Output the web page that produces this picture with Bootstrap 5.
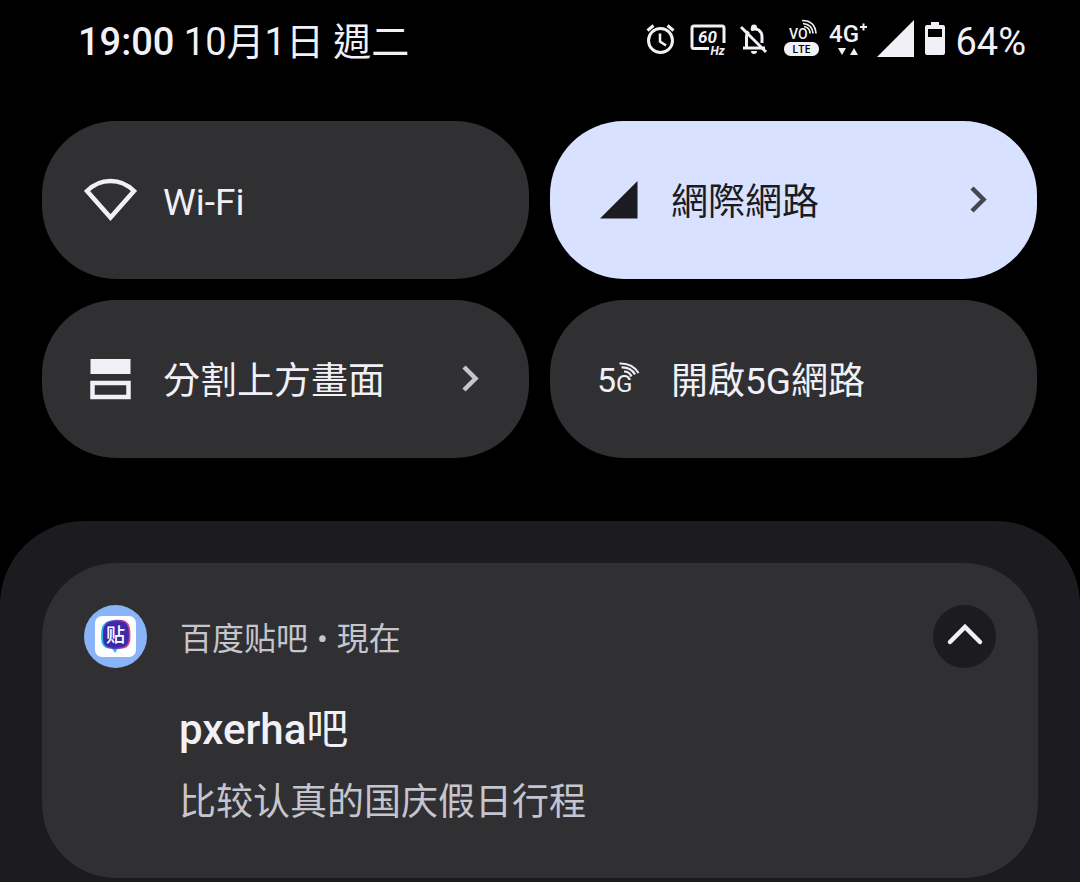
<!DOCTYPE html>
<html lang="zh-Hant">
<head>
<meta charset="utf-8">
<meta name="viewport" content="width=device-width, initial-scale=1">
<title>通知欄</title>
<link href="https://cdn.jsdelivr.net/npm/bootstrap@5.3.0/dist/css/bootstrap.min.css" rel="stylesheet">
<style>
  body { background: #000; color: #f2f0f7; font-family: Roboto, "Noto Sans CJK TC", sans-serif; font-size: 37px; line-height: 44px; }
  svg { display: block; flex: none; }
  .status-bar { padding: 19px 54px 0 78px; font-size: 38px; }
  .status-icons { gap: 10px; }
  .status-icons svg { margin-bottom: 6px; }
  .clock-time { font-weight: 500; }
  .quick-tiles { display: grid; grid-template-columns: 1fr 1fr; gap: 21px; padding: 56px 43px 63px 42px; }
  .tile { min-height: 158px; padding: 0 40px 0 42px; border: 0; border-radius: 74px; background: #303032; color: #f2f0f7; text-align: left; }
  .tile-icon { width: 53px; margin-right: 26px; }
  .tile-label { padding-top: 6px; }
  .tile-on { background: #d8e1ff; color: #1b1b20; }
  .arrow { color: #c5c5d0; }
  .tile-on .arrow { color: #454652; }
  .shade { background: #1b1b20; border-radius: 84px 84px 0 0; padding: 42px 42px 4px; }
  .notice { background: #303032; border-radius: 74px; padding: 42px 42px 53px; }
  .notice-head { gap: 33px; font-size: 32px; color: #c5c5d0; }
  .notice-head > div { padding-top: 2px; }
  .dot { margin: 0 1px; }
  .notice-text { padding: 38px 0 0 95px; font-family: Roboto, "Noto Sans CJK SC", sans-serif; }
  .notice-title { font-size: 42px; line-height: 48px; font-weight: 500; margin: 0; }
  .notice-title span { font-weight: 400; }
  .notice-body { color: #c5c5d0; margin: 27px 0 0; }
  .fold { width: 63px; height: 63px; border: 0; background: #1b1b20; color: #f2f0f7; }
  .sc { font-family: "Noto Sans CJK SC", sans-serif; }
</style>
</head>
<body>
<div class="d-flex flex-column min-vh-100">
  <header class="status-bar d-flex justify-content-between align-items-center">
    <div><span class="clock-time">19:00</span> <span>10月1日 週二</span></div>
    <div class="status-icons d-flex align-items-center">
      <svg width="32" height="36" viewBox="0 0 32 36" fill="none" stroke="currentColor" stroke-width="3" aria-label="鬧鐘"><circle cx="15.500" cy="19.500" r="12"/><path d="M2.500 9.500 8.500 4.500M28.500 9.500 22.500 4.500"/><path d="M15 12.500v8l6 4" stroke-width="2.500"/></svg>
      <svg width="40" height="40" viewBox="0 0 40 40" fill="none" aria-label="60 Hz"><path d="M22 29.500H7a2 2 0 0 1-2-2V9a2 2 0 0 1 2-2h28a2 2 0 0 1 2 2v15" stroke="currentColor" stroke-width="3"/><text x="20.500" y="24" text-anchor="middle" font-family="Roboto" font-size="17" font-style="italic" font-weight="700" fill="currentColor">60</text><text x="30.500" y="36" text-anchor="middle" font-family="Roboto" font-size="12" font-style="italic" font-weight="700" fill="currentColor">Hz</text></svg>
      <svg width="36" height="36" viewBox="0 0 36 36" fill="none" stroke="currentColor" stroke-width="3" aria-label="靜音"><path d="M6 27h22M9.500 27V16q0-3 2-5.500M14 9c6-3 11 1 11 7v6"/><path d="m4 6 25 25"/><path d="M14 8V6.500a3 3 0 0 1 6 0V8zM14 30h6a3 3 0 0 1-6 0z" fill="currentColor" stroke="none"/></svg>
      <svg width="36" height="40" viewBox="0 0 36 40" fill="none" aria-label="VoLTE"><text x="6" y="20" font-size="14" font-family="Roboto" font-weight="500" fill="currentColor">VO</text><path d="M21 7.500q6 1 6 7M20 4.500q9.500 1 10 10M19 1.500q13 0 14 13" stroke="currentColor" stroke-width="1.700"/><rect x="1" y="23" width="35" height="14" rx="6.500" fill="currentColor"/><text x="18.500" y="34" text-anchor="middle" font-family="Open Sans" font-size="11" font-weight="600" fill="#000">LTE</text></svg>
      <svg width="38" height="40" viewBox="0 0 38 40" fill="currentColor" aria-label="4G+"><text x="0" y="23" font-size="24" font-weight="500" font-family="Roboto">4G</text><path d="M31 7h7v2h-7zM33.500 4.500h2v7h-2zM9 29h8l-4 7zM21 36h8l-4-7z"/></svg>
      <svg width="38" height="38" viewBox="0 0 38 38" fill="currentColor" aria-label="訊號"><path d="M0 37 37 0v37z"/></svg>
      <svg width="20" height="36" viewBox="0 0 20 36" fill="currentColor" aria-label="電池"><path fill-rule="evenodd" d="M6 1h8v3h4a2 2 0 0 1 2 2v26a2 2 0 0 1-2 2H2a2 2 0 0 1-2-2V6a2 2 0 0 1 2-2h4zM3 8v8h14V8z"/></svg>
      <span>64%</span>
    </div>
  </header>

  <main class="quick-tiles">
    <button type="button" class="tile d-flex align-items-center">
      <svg class="tile-icon" height="46" viewBox="0 0 53 46" fill="none" stroke="currentColor" stroke-width="4.500"><path d="M3 14C16 .5 37 .5 50 14L26.500 40.500z"/></svg>
      <span class="tile-label flex-grow-1">Wi-Fi</span>
    </button>
    <button type="button" class="tile tile-on d-flex align-items-center">
      <svg class="tile-icon" height="38" viewBox="0 0 53 38" fill="currentColor"><path d="M8 37.500 45.500 0v37.500z"/></svg>
      <span class="tile-label flex-grow-1">網際網路</span>
      <svg class="arrow" width="32" height="32" viewBox="0 0 32 32" fill="none" stroke="currentColor" stroke-width="4.500"><path d="m7 4 11.500 11.500L7 27"/></svg>
    </button>
    <button type="button" class="tile d-flex align-items-center">
      <svg class="tile-icon" height="42" viewBox="0 0 53 42"><path d="M6.500 1h40v15h-40z" fill="currentColor"/><path d="M8.500 25h36v14h-36z" fill="none" stroke="currentColor" stroke-width="4.500"/></svg>
      <span class="tile-label flex-grow-1">分割上方畫面</span>
      <svg class="arrow" width="32" height="32" viewBox="0 0 32 32" fill="none" stroke="currentColor" stroke-width="4.500"><path d="m7 4 11.500 11.500L7 27"/></svg>
    </button>
    <button type="button" class="tile d-flex align-items-center">
      <svg class="tile-icon" height="42" viewBox="0 0 53 42" fill="currentColor" font-family="Roboto"><text x="5" y="34" font-size="34">5</text><text x="24" y="34" font-size="24">G</text><path d="M32 13.500q5.500 0 7.500 5M29.500 9.500q9-.5 13.500 7M27.500 5.500q13-.5 19 9.500" fill="none" stroke="currentColor" stroke-width="2.200"/></svg>
      <span class="tile-label flex-grow-1">開啟5G網路</span>
    </button>
  </main>

  <section class="shade flex-grow-1">
    <article class="notice">
      <div class="notice-head d-flex align-items-center">
        <svg width="63" height="63" viewBox="0 0 63 63" aria-label="百度贴吧">
          <defs><linearGradient id="rim"><stop offset="0" stop-color="#24c8f5"/><stop offset=".4" stop-color="#4a38c8"/><stop offset="1" stop-color="#f04878"/></linearGradient></defs>
          <circle cx="31.500" cy="31.500" r="31.500" fill="#8ab4f8"/><rect x="11" y="11" width="41" height="41" rx="7" fill="#fff"/>
          <path d="m27 42 4 6 4-6z" fill="#24b8f5"/>
          <path d="M31 15c12-1 15.500 3 15.500 15s-3 14-15.500 14-14-4-14-14 3-14 14-15z" fill="url(#rim)"/>
          <path d="M31 16.500c11-1 14 2 14 13.500s-3 12.500-14 12.500-12-3-12-12.500 2-13 12-13.500z" fill="#3d2aa8"/>
          <text class="sc" x="31.500" y="37" text-anchor="middle" font-size="19" font-weight="500" fill="#fff">贴</text>
        </svg>
        <div class="flex-grow-1"><span class="sc">百度贴吧</span> <span class="dot">•</span> <span>現在</span></div>
        <button type="button" class="fold rounded-circle p-0 d-flex align-items-center justify-content-center" aria-label="收合">
          <svg width="40" height="34" viewBox="0 0 40 34" fill="none" stroke="currentColor" stroke-width="4.500" stroke-linecap="round"><path d="m5 22 15-15 15 15"/></svg>
        </button>
      </div>
      <div class="notice-text" lang="zh-Hans">
        <h2 class="notice-title">pxerha<span>吧</span></h2>
        <p class="notice-body">比较认真的国庆假日行程</p>
      </div>
    </article>
  </section>
</div>
<script src="https://cdn.jsdelivr.net/npm/bootstrap@5.3.0/dist/js/bootstrap.bundle.min.js"></script>
</body>
</html>
